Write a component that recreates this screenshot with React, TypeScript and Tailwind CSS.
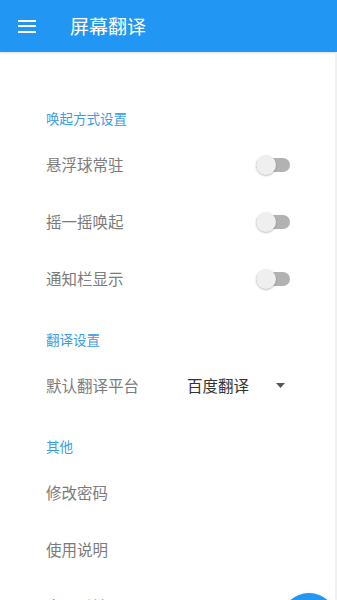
import { ReactNode } from "react"

const font = { fontFamily: '"Noto Sans CJK SC", "Noto Sans", sans-serif' }

const SectionTitle = ({ children }: { children: ReactNode }) => (
  <div className="flex h-[36px] items-center pl-[46px] text-[13.5px] text-[#3d9be6]">
    {children}
  </div>
)

const Toggle = () => (
  <div className="relative h-[20px] w-[34px]">
    <div className="absolute left-0 top-[3px] h-[14px] w-[34px] rounded-full bg-[#b2b2b2]" />
    <div className="absolute left-0 top-0 h-[20px] w-[20px] rounded-full bg-[#efefef] shadow-[0_1px_2px_rgba(0,0,0,0.25)]" />
  </div>
)

const Row = ({ label, right }: { label: string; right?: ReactNode }) => (
  <div className="flex h-[57px] items-center pl-[46px] pr-[45px]">
    <span className="flex-1 text-[15.5px] text-[#7b7b7b]">{label}</span>
    {right}
  </div>
)

export default function App() {
  return (
    <div className="relative h-[600px] w-[337px] overflow-hidden bg-white" style={font}>
      {/* App bar */}
      <div className="flex h-[52px] items-center bg-[#2196f3] shadow-[0_1px_2px_rgba(0,0,0,0.15)]">
        <div className="ml-[18px] flex w-[18px] flex-col gap-[3.5px]">
          <span className="h-[2px] w-full bg-white" />
          <span className="h-[2px] w-full bg-white" />
          <span className="h-[2px] w-full bg-white" />
        </div>
        <span className="ml-[34px] text-[19px] text-white">屏幕翻译</span>
      </div>

      <div className="border-r-2 border-[#f0f0f0] pt-[48px]">
        <SectionTitle>唤起方式设置</SectionTitle>
        <Row label="悬浮球常驻" right={<Toggle />} />
        <Row label="摇一摇唤起" right={<Toggle />} />
        <Row label="通知栏显示" right={<Toggle />} />

        <div className="h-[14px]" />
        <SectionTitle>翻译设置</SectionTitle>
        <div className="flex h-[57px] items-center pl-[46px]">
          <span className="w-[141px] text-[15.5px] text-[#7b7b7b]">默认翻译平台</span>
          <span className="text-[15.5px] text-[#333]">百度翻译</span>
          <svg className="ml-[27px]" width="9" height="5" viewBox="0 0 9 5">
            <path d="M0 0h9L4.5 5z" fill="#555" />
          </svg>
        </div>

        <div className="h-[14px]" />
        <SectionTitle>其他</SectionTitle>
        <Row label="修改密码" />
        <Row label="使用说明" />
        <Row label="意见反馈" />
      </div>

      {/* FAB */}
      <div className="absolute left-[281px] top-[593px] h-[56px] w-[56px] rounded-full bg-[#2196f3] shadow-[0_2px_4px_rgba(0,0,0,0.25)]" />
    </div>
  )
}
